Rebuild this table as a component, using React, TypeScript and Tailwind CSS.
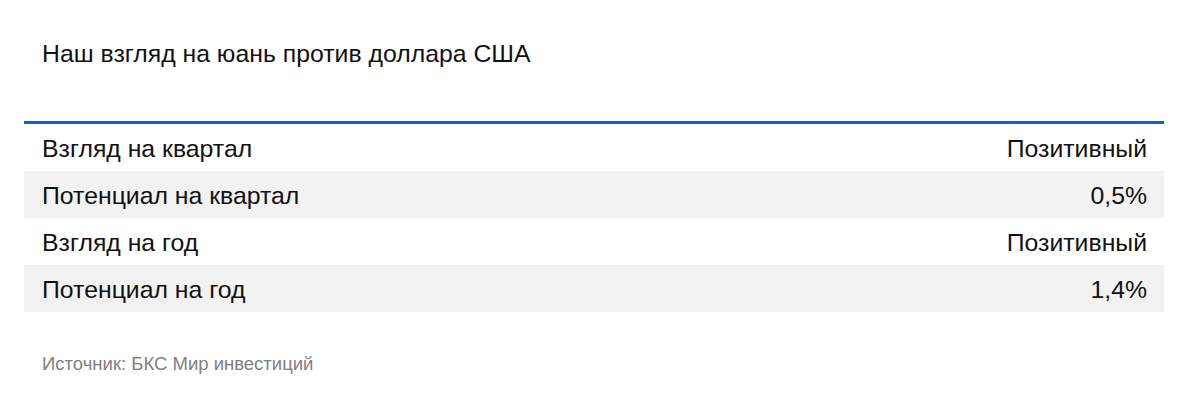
import React from 'react';

const rows = [
  { label: 'Взгляд на квартал', value: 'Позитивный' },
  { label: 'Потенциал на квартал', value: '0,5%' },
  { label: 'Взгляд на год', value: 'Позитивный' },
  { label: 'Потенциал на год', value: '1,4%' },
];

const App: React.FC = () => {
  return (
    <div className="w-[1200px] h-[409px] bg-white pl-[24px] pr-[36px] font-['Liberation_Sans',Arial,sans-serif] text-[#111]">
      {/* Title */}
      <div className="pt-[40px] pl-[18px] text-[24.8px] leading-[28px]">
        Наш взгляд на юань против доллара США
      </div>

      {/* Table */}
      <div className="mt-[53px] border-t-[3px] border-[#0f62cf]">
        {rows.map((row, i) => (
          <div
            key={row.label}
            className={`flex items-center justify-between h-[47px] pt-[3px] pl-[18px] pr-[17px] text-[24.8px] ${i % 2 === 1 ? 'bg-[#f2f2f2]' : 'bg-white'}`}
          >
            <span>{row.label}</span>
            <span>{row.value}</span>
          </div>
        ))}
      </div>

      {/* Source */}
      <div className="mt-[41px] pl-[18px] text-[18.5px] leading-[22px] text-[#808080]">
        Источник: БКС Мир инвестиций
      </div>
    </div>
  );
};

export default App;
